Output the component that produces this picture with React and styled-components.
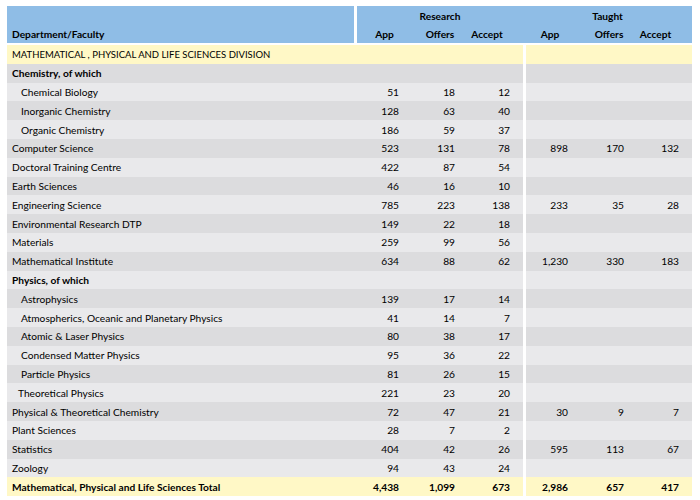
import React from 'react';
import styled, { createGlobalStyle } from 'styled-components';

const Global = createGlobalStyle`
  html, body { margin: 0; padding: 0; background: #fff; }
  body { font-family: Lato, "Liberation Sans", sans-serif; }
`;

const BLUE = '#8fbde6';
const YELLOW = '#fff8c6';
const DARK = '#dcdcde';
const LIGHT = '#e9e9eb';

const Page = styled.div`
  padding: 6px 0 0 7px;
`;

const Table = styled.table`
  width: 685px;
  border-collapse: separate;
  border-spacing: 0;
  table-layout: fixed;
  font-size: 10.2px;
  color: #000;
`;

const HeadCell = styled.th`
  background: ${BLUE};
  color: #000;
  font-weight: 700;
  padding: 0 ${p => p.$pr || 0}px 0 ${p => p.$pl || 0}px;
  text-align: ${p => p.$align || 'center'};
  vertical-align: ${p => p.$valign || 'middle'};
  border-right: ${p => (p.$sep ? '3px solid #fff' : '0')};
  white-space: nowrap;
`;

const HeadLabel = styled.div`
  padding-bottom: 3px;
`;

const HeadRow = styled.tr`
  height: ${p => p.$h}px;
`;

const BodyRow = styled.tr`
  height: ${p => p.$h}px;
  background: ${p => p.$bg};
`;

const LabelCell = styled.td`
  padding: 0 0 0 ${p => p.$indent}px;
  font-size: ${p => (p.$caps ? '9.5px' : 'inherit')};
  font-weight: ${p => (p.$bold ? 700 : 400)};
  color: #000;
  white-space: nowrap;
  border-top: ${p => (p.$first ? '2px solid #fff' : '0')};
`;

const NumCell = styled.td`
  padding: 0 13px 0 0;
  text-align: right;
  font-weight: ${p => (p.$bold ? 700 : 400)};
  color: #000;
  border-left: ${p => (p.$sep ? '3px solid #fff' : '0')};
  border-top: ${p => (p.$first ? '2px solid #fff' : '0')};
`;

const rows = [
  { type: 'division', label: 'MATHEMATICAL , PHYSICAL AND LIFE SCIENCES DIVISION' },
  { type: 'group', label: 'Chemistry, of which' },
  { label: 'Chemical Biology', indent: 14, r: ['51', '18', '12'] },
  { label: 'Inorganic Chemistry', indent: 14, r: ['128', '63', '40'] },
  { label: 'Organic Chemistry', indent: 14, r: ['186', '59', '37'] },
  { label: 'Computer Science', r: ['523', '131', '78'], t: ['898', '170', '132'] },
  { label: 'Doctoral Training Centre', r: ['422', '87', '54'] },
  { label: 'Earth Sciences', r: ['46', '16', '10'] },
  { label: 'Engineering Science', r: ['785', '223', '138'], t: ['233', '35', '28'] },
  { label: 'Environmental Research DTP', r: ['149', '22', '18'] },
  { label: 'Materials', r: ['259', '99', '56'] },
  { label: 'Mathematical Institute', r: ['634', '88', '62'], t: ['1,230', '330', '183'] },
  { type: 'group', label: 'Physics, of which' },
  { label: 'Astrophysics', indent: 14, r: ['139', '17', '14'] },
  { label: 'Atmospherics, Oceanic and Planetary Physics', indent: 14, r: ['41', '14', '7'] },
  { label: 'Atomic & Laser Physics', indent: 14, r: ['80', '38', '17'] },
  { label: 'Condensed Matter Physics', indent: 14, r: ['95', '36', '22'] },
  { label: 'Particle Physics', indent: 14, r: ['81', '26', '15'] },
  { label: 'Theoretical Physics', indent: 11, r: ['221', '23', '20'] },
  { label: 'Physical & Theoretical Chemistry', r: ['72', '47', '21'], t: ['30', '9', '7'] },
  { label: 'Plant Sciences', r: ['28', '7', '2'] },
  { label: 'Statistics', r: ['404', '42', '26'], t: ['595', '113', '67'] },
  { label: 'Zoology', r: ['94', '43', '24'] },
  { type: 'total', label: 'Mathematical, Physical and Life Sciences Total', r: ['4,438', '1,099', '673'], t: ['2,986', '657', '417'] },
];

const blank = ['', '', ''];

export default function App() {
  let stripe = 0;
  return (
    <Page>
      <Global />
      <Table>
        <colgroup>
          <col style={{ width: 350 }} />
          <col style={{ width: 55 }} />
          <col style={{ width: 56 }} />
          <col style={{ width: 55 }} />
          <col style={{ width: 58 }} />
          <col style={{ width: 56 }} />
          <col style={{ width: 55 }} />
        </colgroup>
        <thead>
          <HeadRow $h={19}>
            <HeadCell rowSpan={2} $align="left" $valign="bottom" $pl={5} $sep>
              <HeadLabel>Department/Faculty</HeadLabel>
            </HeadCell>
            <HeadCell colSpan={3}>Research</HeadCell>
            <HeadCell colSpan={3}>Taught</HeadCell>
          </HeadRow>
          <HeadRow $h={18}>
            <HeadCell>App</HeadCell>
            <HeadCell>Offers</HeadCell>
            <HeadCell $pr={17}>Accept</HeadCell>
            <HeadCell $pr={4}>App</HeadCell>
            <HeadCell>Offers</HeadCell>
            <HeadCell $pr={18}>Accept</HeadCell>
          </HeadRow>
        </thead>
        <tbody>
          {rows.map((row, i) => {
            const first = i === 0;
            let bg;
            if (row.type === 'division' || row.type === 'total') bg = YELLOW;
            else {
              bg = stripe % 2 === 0 ? DARK : LIGHT;
              stripe += 1;
            }
            const bold = row.type === 'group' || row.type === 'total';
            const r = row.r || blank;
            const t = row.t || blank;
            return (
              <BodyRow key={i} $bg={bg} $h={first ? 20.8 : 18.8}>
                <LabelCell
                  $indent={row.indent || 5}
                  $bold={bold}
                  $caps={row.type === 'division'}
                  $first={first}
                >
                  {row.label}
                </LabelCell>
                {r.map((v, j) => (
                  <NumCell key={'r' + j} $bold={bold} $first={first}>{v}</NumCell>
                ))}
                {t.map((v, j) => (
                  <NumCell key={'t' + j} $bold={bold} $first={first} $sep={j === 0}>{v}</NumCell>
                ))}
              </BodyRow>
            );
          })}
        </tbody>
      </Table>
    </Page>
  );
}
